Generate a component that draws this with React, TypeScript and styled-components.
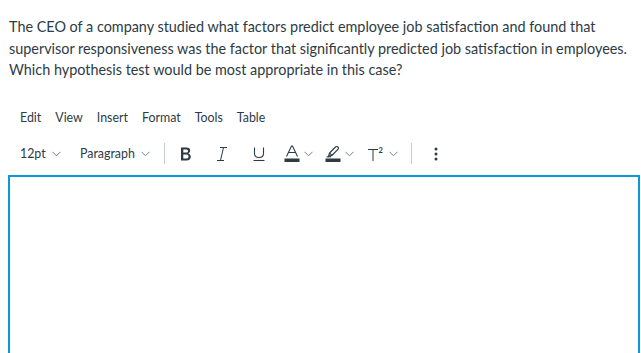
import React from "react";
import styled, { createGlobalStyle } from "styled-components";

const GlobalStyle = createGlobalStyle`
  html, body {
    margin: 0;
    padding: 0;
    background: #ffffff;
    font-family: Lato, "Open Sans", sans-serif;
    color: #2d3b45;
  }
`;

const Page = styled.div`
  width: 641px;
  height: 353px;
  overflow: hidden;
  display: flex;
  flex-direction: column;
`;

const Question = styled.p`
  margin: 16px 0 0 9px;
  font-size: 14.4px;
  line-height: 21.6px;
  color: #2d3b45;
  width: 632px;
  white-space: nowrap;
`;

const MenuBar = styled.div`
  display: flex;
  align-items: center;
  margin: 26px 0 0 20px;
  height: 22px;
`;

const MenuItem = styled.span`
  font-size: 12.4px;
  color: #2d3b45;
  margin-right: 14px;
`;

const Toolbar = styled.div`
  display: flex;
  align-items: center;
  margin: 14px 0 0 20px;
  height: 22px;
`;

const Group = styled.div<{ $w: number }>`
  display: flex;
  align-items: center;
  width: ${(p) => p.$w}px;
  font-size: 12.4px;
  color: #2d3b45;
  gap: 6px;
  flex-shrink: 0;
`;

const Sep = styled.div<{ $ml: number; $mr: number }>`
  width: 1px;
  height: 21px;
  background: #c7cdd1;
  margin-left: ${(p) => p.$ml}px;
  margin-right: ${(p) => p.$mr}px;
  flex-shrink: 0;
`;

const Icon = styled.div<{ $w: number }>`
  display: flex;
  align-items: center;
  width: ${(p) => p.$w}px;
  gap: 4px;
  flex-shrink: 0;
`;

const Editor = styled.div`
  margin: 10px 1px 0 8px;
  border: 2px solid #0a98d8;
  border-bottom: none;
  flex: 1;
`;

function Chevron() {
  return (
    <svg width="9" height="6" viewBox="0 0 9 6">
      <path d="M0.5 0.8 L4.5 4.8 L8.5 0.8" fill="none" stroke="#73818c" strokeWidth="1" />
    </svg>
  );
}

function BoldIcon() {
  return (
    <svg width="14" height="16" viewBox="0 0 14 16">
      <path
        d="M2 1.5 H7.5 C10 1.5 11.2 2.8 11.2 4.6 C11.2 6 10.4 7 9.2 7.4 C10.8 7.8 11.8 9 11.8 10.8 C11.8 13 10.2 14.5 7.6 14.5 H2 Z M4.3 3.4 V6.6 H7.3 C8.4 6.6 9 6 9 5 C9 4 8.4 3.4 7.3 3.4 Z M4.3 8.5 V12.6 H7.6 C8.8 12.6 9.5 11.9 9.5 10.5 C9.5 9.2 8.8 8.5 7.6 8.5 Z"
        fill="#2d3b45"
        fillRule="evenodd"
      />
    </svg>
  );
}

function ItalicIcon() {
  return (
    <svg width="14" height="16" viewBox="0 0 14 16">
      <path d="M5 1.5 H12 M2 14.5 H9 M8.5 1.5 L5.5 14.5" fill="none" stroke="#2d3b45" strokeWidth="1" />
    </svg>
  );
}

function UnderlineIcon() {
  return (
    <svg width="14" height="16" viewBox="0 0 14 16">
      <path d="M2.5 1.5 V7.5 C2.5 10.2 4.3 11.5 7 11.5 C9.7 11.5 11.5 10.2 11.5 7.5 V1.5" fill="none" stroke="#2d3b45" strokeWidth="1.1" />
      <path d="M1.5 14.5 H12.5" stroke="#2d3b45" strokeWidth="1.1" />
    </svg>
  );
}

function TextColorIcon() {
  return (
    <svg width="16" height="18" viewBox="0 0 16 18">
      <path d="M2.5 11.5 L7.5 1 H8.5 L13.5 11.5 M4.5 7.5 H11.5" fill="none" stroke="#2d3b45" strokeWidth="1.1" />
      <rect x="0.5" y="13.5" width="15" height="3.5" fill="#2d3b45" />
    </svg>
  );
}

function HighlightIcon() {
  return (
    <svg width="16" height="18" viewBox="0 0 16 18">
      <path d="M3.5 11.5 L4.5 8 L10.5 2 C11.2 1.3 12.2 1.3 12.9 2 C13.6 2.7 13.6 3.7 12.9 4.4 L6.9 10.4 Z M4.5 8 L7 10.4" fill="none" stroke="#2d3b45" strokeWidth="1.2" />
      <path d="M1.5 11.8 H6" stroke="#2d3b45" strokeWidth="1" />
      <rect x="0.5" y="13.5" width="15" height="3.5" fill="#2d3b45" />
    </svg>
  );
}

function SuperIcon() {
  return (
    <svg width="18" height="16" viewBox="0 0 18 16">
      <path d="M1 3.5 H11 M6 3.5 V15" fill="none" stroke="#2d3b45" strokeWidth="1" />
      <text x="11.5" y="6.5" fontSize="7.5" fontWeight="700" fill="#2d3b45" fontFamily="Lato, sans-serif">
        2
      </text>
    </svg>
  );
}

function MoreIcon() {
  return (
    <svg width="4" height="16" viewBox="0 0 4 16">
      <circle cx="2" cy="3" r="1.5" fill="#2d3b45" />
      <circle cx="2" cy="8" r="1.5" fill="#2d3b45" />
      <circle cx="2" cy="13" r="1.5" fill="#2d3b45" />
    </svg>
  );
}

const menu = ["Edit", "View", "Insert", "Format", "Tools", "Table"];

export default function App() {
  return (
    <Page>
      <GlobalStyle />
      <Question>
        The CEO of a company studied what factors predict employee job satisfaction and found that
        <br />
        supervisor responsiveness was the factor that significantly predicted job satisfaction in employees.
        <br />
        Which hypothesis test would be most appropriate in this case?
      </Question>
      <MenuBar>
        {menu.map((m) => (
          <MenuItem key={m}>{m}</MenuItem>
        ))}
      </MenuBar>
      <Toolbar>
        <Group $w={60}>
          12pt <Chevron />
        </Group>
        <Group $w={78}>
          Paragraph <Chevron />
        </Group>
        <Sep $ml={6} $mr={14} />
        <Icon $w={36}>
          <BoldIcon />
        </Icon>
        <Icon $w={37}>
          <ItalicIcon />
        </Icon>
        <Icon $w={32}>
          <UnderlineIcon />
        </Icon>
        <Icon $w={41}>
          <TextColorIcon />
          <Chevron />
        </Icon>
        <Icon $w={42}>
          <HighlightIcon />
          <Chevron />
        </Icon>
        <Icon $w={40}>
          <SuperIcon />
          <Chevron />
        </Icon>
        <Sep $ml={4} $mr={22} />
        <MoreIcon />
      </Toolbar>
      <Editor />
    </Page>
  );
}
